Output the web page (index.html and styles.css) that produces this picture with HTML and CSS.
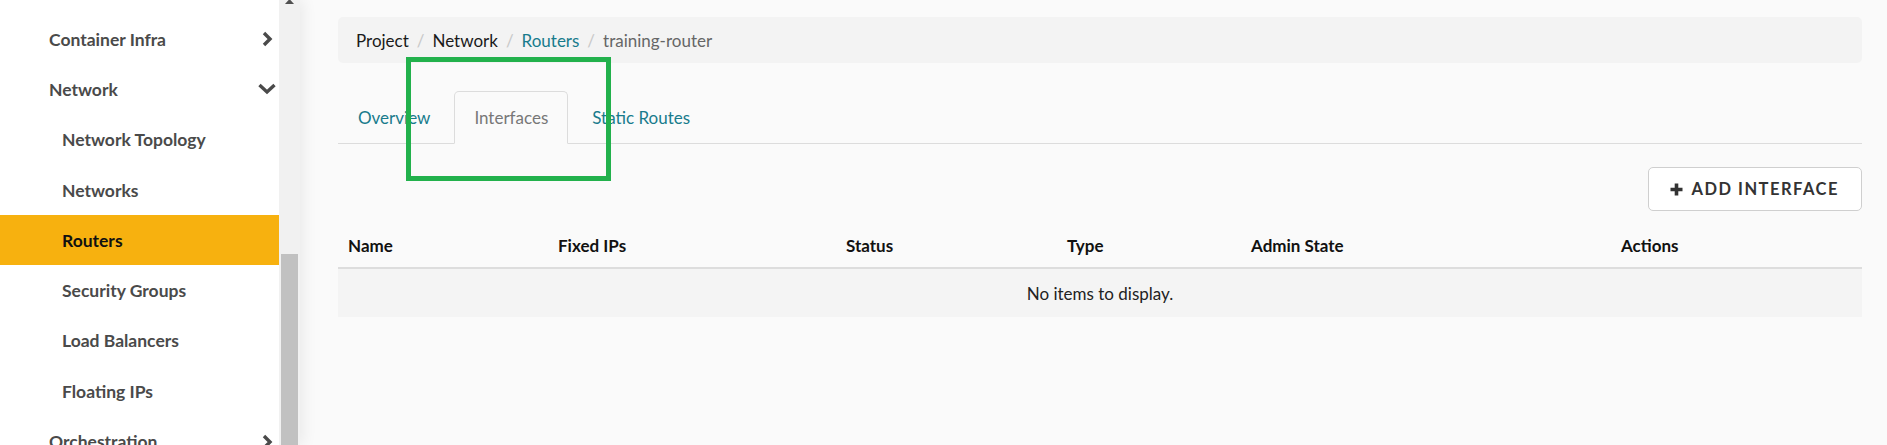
FILE: index.html
```html
<!DOCTYPE html>
<html lang="en">
<head>
<meta charset="utf-8">
<title>Router Interfaces</title>
<link rel="stylesheet" href="styles.css">
</head>
<body>
<div class="app">
  <aside class="sidebar">
    <nav class="nav">
      <div class="nav-item group"><span>Container Infra</span><svg class="chev" viewBox="0 0 18 16" width="18" height="16"><polyline points="6,2 12,8 6,14" fill="none" stroke="#4a4a4a" stroke-width="3.4"/></svg></div>
      <div class="nav-item group"><span>Network</span><svg class="chev" viewBox="0 0 18 16" width="18" height="16"><polyline points="1.5,4 9,11 16.5,4" fill="none" stroke="#4a4a4a" stroke-width="3.4"/></svg></div>
      <div class="nav-item sub"><span>Network Topology</span></div>
      <div class="nav-item sub"><span>Networks</span></div>
      <div class="nav-item sub active"><span>Routers</span></div>
      <div class="nav-item sub"><span>Security Groups</span></div>
      <div class="nav-item sub"><span>Load Balancers</span></div>
      <div class="nav-item sub"><span>Floating IPs</span></div>
      <div class="nav-item group"><span>Orchestration</span><svg class="chev" viewBox="0 0 18 16" width="18" height="16"><polyline points="6,2 12,8 6,14" fill="none" stroke="#4a4a4a" stroke-width="3.4"/></svg></div>
    </nav>
    <div class="scrollbar">
      <svg class="sb-arrow" viewBox="0 0 9 4" width="9" height="4"><polygon points="0,4 9,4 4.5,-1" fill="#505050"/></svg>
      <div class="sb-thumb"></div>
    </div>
  </aside>
  <main class="main">
    <ol class="breadcrumb">
      <li class="crumb">Project</li>
      <li class="sep">/</li>
      <li class="crumb">Network</li>
      <li class="sep">/</li>
      <li class="crumb link">Routers</li>
      <li class="sep">/</li>
      <li class="crumb current">training-router</li>
    </ol>
    <ul class="tabs">
      <li class="tab">Overview</li>
      <li class="tab active">Interfaces</li>
      <li class="tab">Static Routes</li>
    </ul>
    <div class="actions">
      <button class="btn"><svg class="plus" viewBox="0 0 13 13" width="13" height="13"><path d="M6.5 0.5v12M0.5 6.5h12" stroke="#333" stroke-width="3.6" fill="none"/></svg><span>ADD INTERFACE</span></button>
    </div>
    <div class="table">
      <div class="thead">
        <div class="th">Name</div>
        <div class="th">Fixed IPs</div>
        <div class="th">Status</div>
        <div class="th">Type</div>
        <div class="th">Admin State</div>
        <div class="th">Actions</div>
      </div>
      <div class="empty">No items to display.</div>
    </div>
    <div class="annotation"></div>
  </main>
</div>
</body>
</html>
```
FILE: styles.css
```css
* { box-sizing: border-box; }
html, body { margin: 0; padding: 0; }
body {
  font-family: "Lato", "Open Sans", sans-serif;
  background: #fafafa;
  color: #222;
}
.app {
  display: flex;
  width: 1887px;
  height: 445px;
  overflow: hidden;
}
.sidebar {
  display: flex;
  flex: 0 0 300px;
  height: 445px;
  position: relative;
  z-index: 2;
  box-shadow: 3px 0 14px rgba(0,0,0,0.07);
}
.nav {
  width: 279px;
  background: #fff;
  padding-top: 14px;
  overflow: hidden;
}
.nav-item {
  height: 50.3px;
  display: flex;
  align-items: center;
  justify-content: space-between;
  font-weight: 700;
  font-size: 17.5px;
  color: #4a4a4a;
  padding-right: 3px;
}
.nav-item.group { padding-left: 49px; }
.nav-item.sub { padding-left: 62px; }
.nav-item.active {
  background: #f7b10f;
  color: #111;
}
.chev { display: block; }
.scrollbar {
  width: 21px;
  background: #f1f1f1;
  position: relative;
  display: flex;
  flex-direction: column;
}
.sb-arrow { display: block; margin-left: 6px; }
.sb-thumb {
  margin-top: 250px;
  margin-left: 2px;
  width: 17px;
  flex: 1;
  background: #c1c1c1;
}
.main {
  flex: 1;
  position: relative;
  background: #fafafa;
  padding: 17px 25px 0 38px;
}
.breadcrumb {
  list-style: none;
  margin: 0;
  height: 46px;
  padding: 0 0 0 18px;
  display: flex;
  align-items: center;
  background: #f3f3f3;
  border-radius: 5px;
  font-size: 17px;
}
.crumb { color: #1a1a1a; }
.crumb.link { color: #187b8c; }
.crumb.current { color: #666; }
.sep { color: #c8c8c8; padding: 0 8px; }
.tabs {
  list-style: none;
  margin: 28px 0 0;
  padding: 0;
  display: flex;
  gap: 4px;
  border-bottom: 1px solid #dcdcdc;
  height: 53px;
}
.tab {
  height: 53px;
  padding: 0 19px;
  display: flex;
  align-items: center;
  font-size: 17px;
  color: #187b8c;
  border: 1px solid transparent;
  border-radius: 5px 5px 0 0;
}
.tab.active {
  color: #777;
  border-color: #dcdcdc;
  border-bottom-color: #fafafa;
  background: #fafafa;
}
.actions {
  display: flex;
  justify-content: flex-end;
  margin-top: 23px;
}
.btn {
  height: 44px;
  padding: 0 22px 0 21px;
  display: flex;
  align-items: center;
  gap: 8px;
  background: #fff;
  border: 1px solid #cfcfcf;
  border-radius: 5px;
  font-family: inherit;
  font-weight: 700;
  font-size: 16.5px;
  letter-spacing: 1.5px;
  color: #333;
}
.plus { display: block; }
.table { margin-top: 12px; }
.thead {
  display: grid;
  grid-template-columns: 210px 288px 221px 184px 370px 1fr;
  height: 46px;
  align-items: center;
  padding: 0 0 0 10px;
  border-bottom: 2px solid #dddddd;
  font-weight: 700;
  font-size: 17px;
  color: #111;
}
.empty {
  height: 48px;
  display: flex;
  align-items: center;
  justify-content: center;
  background: #f4f4f4;
  font-size: 17px;
  color: #222;
}
.annotation {
  position: absolute;
  left: 106px;
  top: 57px;
  width: 205px;
  height: 124px;
  border: 5px solid #22b14c;
  pointer-events: none;
}
```
